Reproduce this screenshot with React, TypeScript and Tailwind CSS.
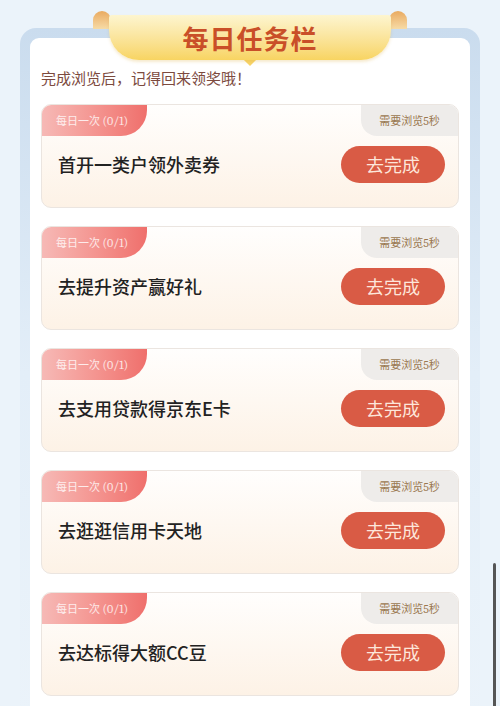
import React from "react";

const tasks = [
  "首开一类户领外卖券",
  "去提升资产赢好礼",
  "去支用贷款得京东E卡",
  "去逛逛信用卡天地",
  "去达标得大额CC豆",
];

function TaskCard({ title }: { title: string }) {
  return (
    <div className="h-[104px] w-full overflow-hidden rounded-[10px] border border-[#ebe5e0] bg-gradient-to-b from-[#fffefd] to-[#fdf2e6]">
      <div className="flex h-[31px] items-start justify-between">
        <div className="flex h-[31px] w-[105px] items-center rounded-br-[26px] bg-gradient-to-r from-[#f6b9b6] to-[#ef6f6c] pl-[14px] text-[11px] text-white/80">
          <span className="leading-[14px]">
            每日一次 <span className="font-serif text-[12px]">(0/1)</span>
          </span>
        </div>
        <div className="flex h-[31px] w-[97px] items-center justify-center rounded-bl-[16px] bg-[#eeecea] text-[11px] text-[#9a7850]">
          <span className="leading-[14px]">
            需要浏览<span className="font-serif text-[12px]">5</span>秒
          </span>
        </div>
      </div>
      <div className="mt-[10px] flex items-center justify-between pl-[16px] pr-[13px]">
        <div className="text-[18px] font-medium text-[#222]">{title}</div>
        <div className="flex h-[37px] w-[104px] items-center justify-center rounded-full bg-[#d95b45] text-[18px] text-[#fde6db]">
          去完成
        </div>
      </div>
    </div>
  );
}

export default function App() {
  return (
    <div className="relative h-[706px] w-[500px] overflow-hidden bg-[#ebf3fa] font-['Noto_Sans_CJK_SC','Noto_Sans',sans-serif]">
      <div className="relative mx-[20px] mt-[28px] rounded-t-[16px] bg-gradient-to-b from-[#cadcee] via-[#e3eef8] to-[#ebf3fa] px-[10px] pt-[10px]">
        <div className="rounded-t-[9px] bg-white px-[11px] pb-[20px]">
          <div className="pt-[31px] text-[15px] leading-[18px] text-[#7c4a3e]">
            完成浏览后，记得回来领奖哦！
          </div>
          <div className="mt-[17px] flex flex-col gap-[18px]">
            {tasks.map((t) => (
              <TaskCard key={t} title={t} />
            ))}
          </div>
        </div>
      </div>

      {/* ribbon banner */}
      <div className="absolute left-[93px] top-[11px] h-[54px] w-[314px]">
        <div className="absolute left-0 top-0 h-[18px] w-[18px] rounded-t-full bg-gradient-to-b from-[#e9aa60] to-[#f6dba6]" />
        <div className="absolute right-0 top-0 h-[18px] w-[18px] rounded-t-full bg-gradient-to-b from-[#e9aa60] to-[#f6dba6]" />
        <div className="absolute bottom-[1px] left-[50%] h-[10px] w-[10px] -translate-x-1/2 rotate-45 bg-[#f8d468]" />
        <div className="absolute bottom-[5px] left-[16px] right-[16px] top-[4px] flex items-center justify-center rounded-b-[30px] rounded-t-[3px] bg-gradient-to-b from-[#fdf5cf] to-[#f8d461] shadow-[0_2px_3px_rgba(220,170,60,0.25)]">
          <span className="text-[26px] font-bold tracking-[1px] text-[#c94f28]">每日任务栏</span>
        </div>
      </div>

      {/* scrollbar */}
      <div className="absolute right-[4px] top-[563px] h-[150px] w-[3px] rounded-full bg-[#555]" />
    </div>
  );
}
